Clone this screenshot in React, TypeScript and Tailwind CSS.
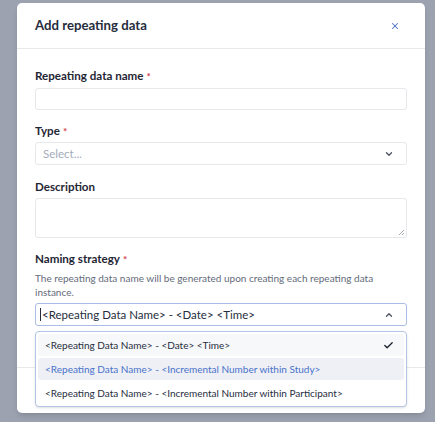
import { Check, ChevronDown, ChevronUp, X } from "lucide-react";

const label = "text-[11.6px] leading-[18px] font-bold text-[#1f2634]";

function Req() {
    return <span className="text-[#d13b4c] text-[10px] align-top ml-[3px]">*</span>;
}

export default function App() {
    const options = [
        "<Repeating Data Name> - <Date> <Time>",
        "<Repeating Data Name> - <Incremental Number within Study>",
        "<Repeating Data Name> - <Incremental Number within Participant>",
    ];

    return (
        <div className="min-h-[422px] bg-[#9ca2b0] pt-[3px] pl-[17px] font-['Lato',sans-serif]">
            <div className="w-[408px] bg-white rounded-[5px] shadow-md">
                {/* header */}
                <div className="h-[46px] px-[18px] flex items-center justify-between border-b border-[#e6e8ec]">
                    <h2 className="text-[13.2px] font-bold text-[#262d3d]">Add repeating data</h2>
                    <X size={10} strokeWidth={2.5} className="text-[#4b6fc4] mr-[7px]" />
                </div>

                {/* body */}
                <div className="px-[18px] pt-[18px] pb-[41px]">
                    <div className={label}>
                        Repeating data name<Req />
                    </div>
                    <div className="mt-[3px] h-[22px] border border-[#e6e8ec] rounded-[3px]" />

                    <div className={label + " mt-[12px]"}>
                        Type<Req />
                    </div>
                    <div className="mt-[2px] h-[23px] border border-[#e6e8ec] rounded-[3px] flex items-center justify-between pl-[7px] pr-[12px]">
                        <span className="text-[11.5px] text-[#a3abbb]">Select...</span>
                        <ChevronDown size={10} strokeWidth={3} className="text-[#4a5160]" />
                    </div>

                    <div className={label + " mt-[13px]"}>Description</div>
                    <div className="mt-[2px] h-[40px] border border-[#e6e8ec] rounded-[3px] relative">
                        <svg width="7" height="7" viewBox="0 0 7 7" className="absolute right-[1px] bottom-[1px]">
                            <path d="M1 6 L6 1 M4 6 L6 4" stroke="#9a9ea6" strokeWidth="0.9" />
                        </svg>
                    </div>

                    <div className={label + " mt-[12px]"}>
                        Naming strategy<Req />
                    </div>
                    <p className="mt-[3px] text-[10px] leading-[14px] text-[#646b7a]">
                        The repeating data name will be generated upon creating each repeating data instance.
                    </p>
                    <div className="relative mt-[4px]">
                        <div className="h-[23px] border border-[#a9bde6] rounded-[3px] flex items-center justify-between pl-[4px] pr-[12px]">
                            <span className="text-[11.5px] text-[#262d3d] flex items-center">
                                <span className="inline-block w-px h-[13px] bg-[#262d3d] mr-[1px]" />
                                {"<Repeating Data Name> - <Date> <Time>"}
                            </span>
                            <ChevronUp size={10} strokeWidth={3} className="text-[#4a5160]" />
                        </div>

                        {/* dropdown */}
                        <div className="absolute left-0 right-0 top-[28px] z-10 bg-white border border-[#b4c4e6] rounded-[4px] shadow-sm p-[2px] flex flex-col gap-[2px]">
                            {options.map((o, i) => (
                                <div
                                    key={o}
                                    className={
                                        "h-[22px] px-[7px] flex items-center justify-between rounded-[3px] text-[10px] " +
                                        (i === 0
                                            ? "bg-[#f7f8fa] text-[#262d3d]"
                                            : i === 1
                                              ? "bg-[#eef0f6] text-[#4a72c9]"
                                              : "text-[#262d3d]")
                                    }
                                >
                                    <span>{o}</span>
                                    {i === 0 && <Check size={11} strokeWidth={3} className="text-[#1f2634] mr-[3px]" />}
                                </div>
                            ))}
                        </div>
                    </div>
                </div>

                {/* footer */}
                <div className="h-[46px] border-t border-[#e6e8ec]" />
            </div>
        </div>
    );
}
